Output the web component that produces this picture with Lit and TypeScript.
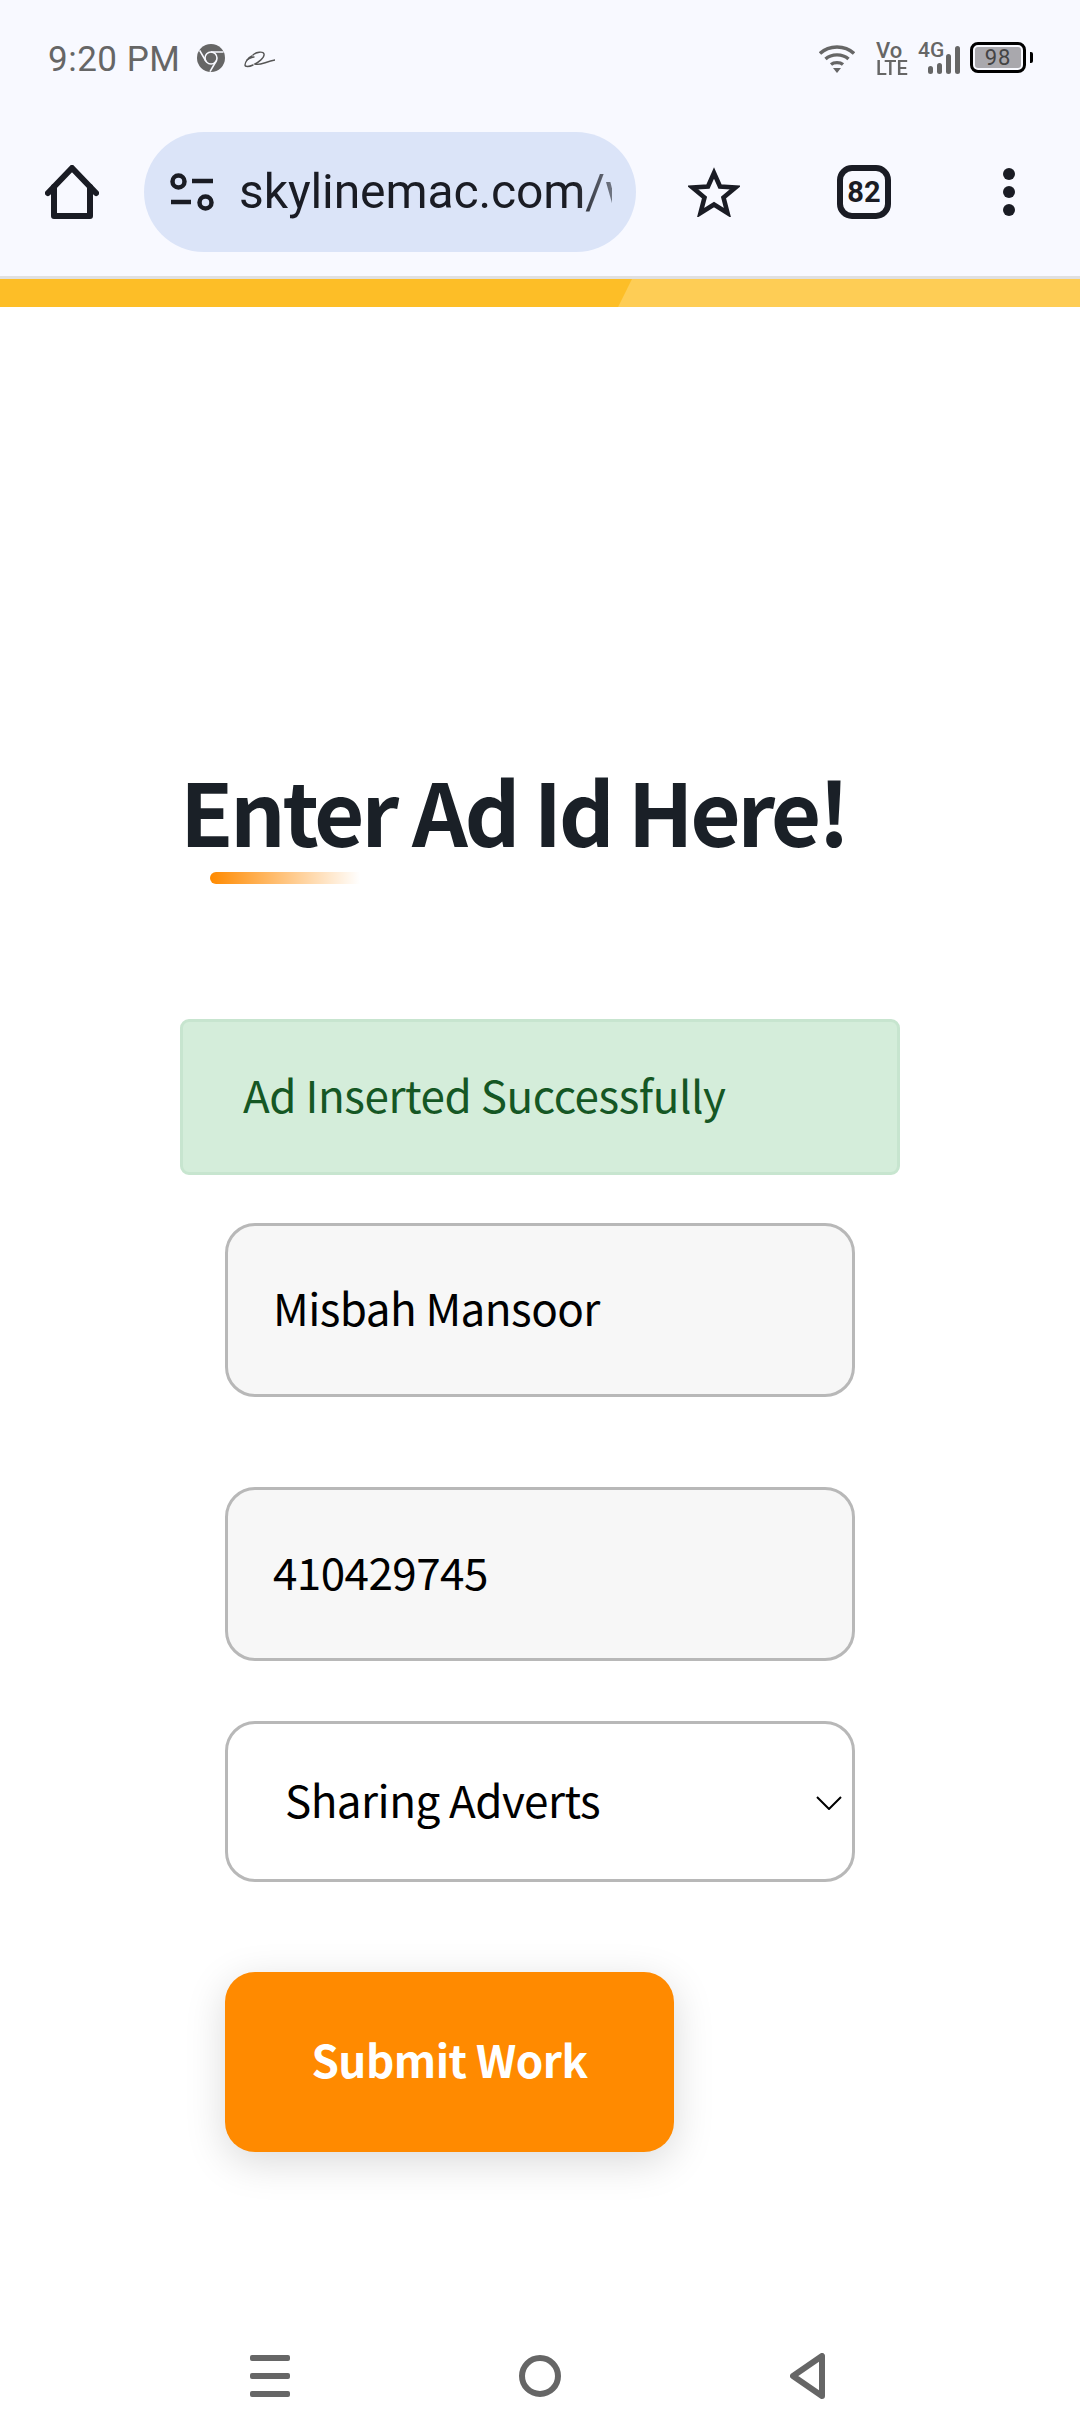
import { LitElement, html, css } from "lit";
import { customElement } from "lit/decorators.js";

@customElement("app-root")
export class AppRoot extends LitElement {
  static styles = css`
    :host { display: block; width: 1080px; height: 2436px; background: #fff; font-family: "Noto Sans CJK SC", "Source Sans Pro", sans-serif; overflow: hidden; }
    .page { display: flex; flex-direction: column; width: 1080px; height: 2436px; }
    svg { display: block; flex: none; }
    .top { background: #f8f9ff; height: 276px; flex: none; }
    .divider { height: 3px; background: #e0e0e0; flex: none; }
    .status { height: 132px; display: flex; box-sizing: border-box; padding: 0 54px 0 48px; }
    .left { display: flex; align-items: flex-start; }
    .time { font: 400 35px/41px Roboto, sans-serif; color: #666; margin-top: 39px; letter-spacing: .5px; }
    .chrome { margin: 44px 0 0 17px; }
    .ali { margin: 51px 0 0 19px; }
    .right { margin-left: auto; display: flex; align-items: flex-start; }
    .wifi { margin-top: 44px; }
    .volte { margin: 41px 0 0 21px; font: 500 20px/17px Roboto, sans-serif; color: #666; width: 29px; }
    .volte span { display: block; }
    .volte .vo { font-size: 22px; line-height: 19px; }
    .volte .lte { font-size: 21px; transform: scaleX(.95); transform-origin: left; }
    .net { position: relative; margin: 42px 0 0 13px; width: 42px; height: 32px; }
    .net-t { position: absolute; left: 0; top: -2px; font: 500 21px/20px Roboto, sans-serif; color: #666; }
    .bars { position: absolute; left: 10px; bottom: 0; display: flex; align-items: flex-end; gap: 4px; }
    .bars i { display: block; width: 5px; background: #666; border-radius: 2.5px; }
    .battery { margin: 42px 0 0 10px; width: 56px; height: 31px; box-sizing: border-box; border: 3px solid #000; border-radius: 8px; padding: 2px; position: relative; }
    .battery b { display: block; height: 100%; background: #a9a8ad; border-radius: 3px; font: 400 22px/21px Roboto, sans-serif; color: #444; text-align: center; letter-spacing: 1px; }
    .battery::after { content: ""; position: absolute; right: -10px; top: 7px; width: 3px; height: 11px; background: #000; border-radius: 0 2px 2px 0; }
    .toolbar { display: flex; height: 120px; align-items: center; padding-left: 45px; }
    .pill { margin-left: 45px; width: 492px; height: 120px; border-radius: 60px; background: #dbe4f8; display: flex; align-items: center; box-sizing: border-box; padding-left: 26px; flex: none; }
    .url { margin-left: 25px; width: 373px; overflow: hidden; white-space: nowrap; font: 400 48px/60px Roboto, sans-serif; letter-spacing: -.1px; color: #1a1c24; -webkit-mask-image: linear-gradient(90deg, #000 90%, rgba(0, 0, 0, .55) 100%); mask-image: linear-gradient(90deg, #000 90%, rgba(0, 0, 0, .55) 100%); }
    .star { margin-left: 52px; }
    .tab { margin-left: 97px; width: 54px; height: 54px; box-sizing: border-box; border: 6px solid #1a1c24; border-radius: 15px; display: flex; align-items: center; justify-content: center; font: 700 29px/1 Roboto, sans-serif; color: #1a1c24; }
    .menu { margin-left: 112px; display: flex; flex-direction: column; gap: 6px; }
    .menu i { display: block; width: 12px; height: 12px; border-radius: 50%; background: #1a1c24; }
    .progress { height: 28px; background: #fecd55; flex: none; }
    .progress div { width: 632px; height: 100%; background: #fdbe27; clip-path: polygon(0 0, 100% 0, 97.8% 100%, 0 100%); }
    .main { flex: 1; display: flex; flex-direction: column; min-height: 0; }
    h1 { margin: 450px 0 0 180px; font-size: 87px; line-height: 104px; font-weight: 700; color: #1a2027; letter-spacing: -3.4px; white-space: nowrap; }
    .rule { margin: 11px 0 0 210px; width: 150px; height: 12px; border-radius: 6px 0 0 6px; background: linear-gradient(90deg, #ff8a00, rgba(255, 138, 0, 0)); }
    .alert { margin: 135px 0 0 180px; width: 720px; height: 156px; box-sizing: border-box; border: 3px solid #c7e5cf; border-radius: 9px; background: #d4edda; color: #155724; display: flex; align-items: center; padding: 0 0 6px 60px; font-size: 44px; line-height: 60px; letter-spacing: -.45px; }
    .field { margin-left: 225px; width: 630px; box-sizing: border-box; border: 3px solid #b8b8b8; border-radius: 30px; display: flex; align-items: center; color: #000; font-size: 44px; line-height: 60px; letter-spacing: -.55px; }
    .input { height: 174px; background: #f7f7f7; padding: 0 0 6px 45px; }
    .select { height: 161px; margin-top: 60px; padding: 0 0 5px 57px; background: #fff; position: relative; }
    .chev { position: absolute; right: 10px; top: 72px; }
    .first { margin-top: 48px; }
    .second { margin-top: 90px; }
    .submit { margin: 90px 0 0 225px; width: 449px; height: 180px; box-sizing: border-box; padding-bottom: 6px; border-radius: 30px; background: #ff8a00; color: #fff; font-size: 44px; font-weight: 700; line-height: 60px; letter-spacing: -.5px; display: flex; align-items: center; justify-content: center; box-shadow: 0 10px 40px rgba(0, 0, 0, .15); }
    .nav { height: 83px; box-sizing: border-box; padding-left: 250px; display: flex; align-items: flex-start; flex: none; }
    .ham { margin-top: 2px; display: flex; flex-direction: column; gap: 12px; width: 40px; }
    .ham i { display: block; height: 6px; border-radius: 2px; background: #666; }
    .circle { margin: 2px 0 0 229px; width: 42px; height: 42px; box-sizing: border-box; border: 6px solid #666; border-radius: 50%; }
    .back { margin-left: 229px; }
  `;

  render() {
    return html`
      <div class="page">
        <div class="top">
          <div class="status">
            <div class="left">
              <span class="time">9:20 PM</span>
              <svg class="chrome" width="28" height="28" viewBox="0 0 28 28">
                <circle cx="14" cy="14" r="14" fill="#666"/>
                <circle cx="14" cy="14" r="6" fill="#666" stroke="#f8f9ff" stroke-width="1.6"/>
                <path d="M14 8H26.5M8.8 17 2.6 6.4M19.2 17 13 27.6" stroke="#f8f9ff" stroke-width="1.6" fill="none"/>
              </svg>
              <svg class="ali" width="31" height="17" viewBox="0 0 31 17" fill="none" stroke="#555" stroke-width="1.4" stroke-linecap="round">
                <path d="M8 5C4 7 1 11 1 14C1 16 5 16 9 14"/>
                <path d="M3 9C6 7 8 6 10 6"/>
                <path d="M9 4C12 1 19 0 20 3C21 7 13 12 11 13C15 15 21 11 31 9"/>
              </svg>
            </div>
            <div class="right">
              <svg class="wifi" width="36" height="29" viewBox="0 0 36 29" fill="none" stroke="#666" stroke-width="3.4">
                <path d="M1 9.5C10 .8 26 .8 35 9.5"/>
                <path d="M6.5 15C12.5 9.5 23.5 9.5 29.5 15"/>
                <path d="M12 20.5C15 18 21 18 24 20.5"/>
                <path d="M14 24H22L18 29Z" fill="#666" stroke="none"/>
              </svg>
              <div class="volte"><span class="vo">Vo</span><span class="lte">LTE</span></div>
              <div class="net">
                <span class="net-t">4G</span>
                <div class="bars">
                  <i style="height:8px"></i><i style="height:11px"></i><i style="height:20px"></i><i style="height:28px"></i>
                </div>
              </div>
              <div class="battery"><b>98</b></div>
            </div>
          </div>
          <div class="toolbar">
            <svg width="54" height="54" viewBox="0 0 54 54" fill="none" stroke="#1a1c24" stroke-width="6" stroke-linejoin="round" stroke-linecap="round">
              <path d="M3 28 27 3 51 28"/>
              <path d="M9 22V51H45V22"/>
            </svg>
            <div class="pill">
              <svg width="44" height="38" viewBox="0 0 44 38" fill="none" stroke="#1a1c24" stroke-width="4.5">
                <circle cx="8.5" cy="8.5" r="6"/>
                <path d="M22 8H43M1 29H21"/>
                <circle cx="35.5" cy="29.500" r="6"/>
              </svg>
              <div class="url">skylinemac.com/work</div>
            </div>
            <svg class="star" width="52" height="50" viewBox="0 0 52 50" fill="none" stroke="#1a1c24" stroke-width="4.6" stroke-linejoin="miter">
              <path d="M26 6 32 19.500 47.500 20.500 35.500 30.500 39.500 46 26 37.500 12.500 46 16.500 30.500 4.500 20.500 20 19.500Z"/>
            </svg>
            <div class="tab">82</div>
            <div class="menu"><i></i><i></i><i></i></div>
          </div>
        </div>
        <div class="divider"></div>
        <div class="progress"><div></div></div>
        <div class="main">
          <h1>Enter Ad Id Here!</h1>
          <div class="rule"></div>
          <div class="alert">Ad Inserted Successfully</div>
          <div class="field input first">Misbah Mansoor</div>
          <div class="field input second">410429745</div>
          <div class="field select">Sharing Adverts
            <svg class="chev" width="26" height="14" viewBox="0 0 26 14" fill="none" stroke="#000" stroke-width="2">
              <path d="M1 1 13 13 25 1"/>
            </svg>
          </div>
          <div class="submit">Submit Work</div>
        </div>
        <div class="nav">
          <div class="ham"><i></i><i></i><i></i></div>
          <div class="circle"></div>
          <svg class="back" width="35" height="46" viewBox="0 0 35 46" fill="none" stroke="#666" stroke-width="6" stroke-linejoin="round">
            <path d="M32 3V43L3 23Z"/>
          </svg>
        </div>
      </div>
    `;
  }
}
